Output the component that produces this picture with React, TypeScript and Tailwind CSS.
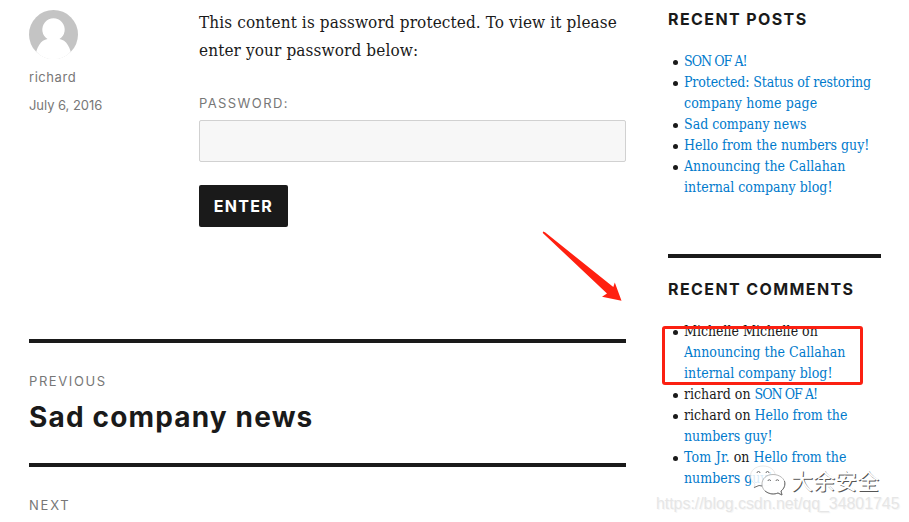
import type { ReactNode } from 'react';

const meta = "font-['Inter',sans-serif] text-[13px] text-[#777777]";
const link = 'text-[#007acc]';

function Avatar() {
  return (
    <svg className="block h-[49px] w-[49px]" viewBox="0 0 49 49">
      <defs>
        <clipPath id="round">
          <circle cx="24.5" cy="24.5" r="24.5" />
        </clipPath>
      </defs>
      <g clipPath="url(#round)">
        <rect width="49" height="49" fill="#c4c4c4" />
        <path d="M6 49 C7 37 12 30 18.5 29 A11.2 11.2 0 1 1 30.5 29 C37 30 42 37 43 49 Z" fill="#fff" />
        <rect y="43.5" width="49" height="6" fill="#fff" />
      </g>
    </svg>
  );
}

function Item({ children }: { children: ReactNode }) {
  return (
    <li className="flex">
      <span className="ml-[4.5px] mr-[6.5px] mt-[9px] h-[5px] w-[5px] shrink-0 rounded-full bg-[#1a1a1a]" />
      <div className="whitespace-nowrap">{children}</div>
    </li>
  );
}

function WidgetTitle({ children }: { children: ReactNode }) {
  return (
    <h2 className="font-['Inter',sans-serif] text-base font-bold leading-[21px] tracking-[1.4px]">
      {children}
    </h2>
  );
}

function SonOfA() {
  return <a className="tracking-[-0.95px] text-[#007acc]">SON OF A!</a>;
}

function WeChat() {
  return (
    <svg className="h-[34px] w-[38px]" viewBox="0 0 38 34">
      <path
        d="M14 2 C6 2 1.5 7 1.5 12 C1.5 16 4 18.5 6 20 L5 24 L10 21.5 C20 24 26.5 18 26.5 12 C26 6 21 2 14 2Z"
        stroke="#dedede"
        strokeWidth="0.7"
        fill="#fff"
        fillOpacity="0.85"
      />
      <path
        d="M24 10.5 C17 10.5 13 15 13 20 C13 26 18 30 24 30 C26 30 27.5 29.6 29 29 L33 31 L32 27 C34.5 25 36 23 36 20 C36 15 31 10.5 24 10.5Z"
        stroke="#9b9b9b"
        strokeWidth="0.7"
        fill="#fff"
        fillOpacity="0.85"
      />
      <g fill="none" stroke="#666" strokeWidth="0.9">
        <path d="M8 9 a1.5 1.5 0 0 1 3 0 M17 9 a1.5 1.5 0 0 1 3 0 M19 17 a1.3 1.3 0 0 1 2.6 0 M27 17 a1.3 1.3 0 0 1 2.6 0" />
        <path d="M5 23.5 L10 21.5 L13 22 M16 27 C21 30.5 25 30.5 29 29 L33 31 L32 27 C35 25 36.5 21 35.5 17" />
      </g>
    </svg>
  );
}

export default function App() {
  return (
    <div className="relative flex h-[522px] w-[909px] overflow-hidden bg-white pl-[29px] text-[#1a1a1a]">
      <main className="w-[597px] shrink-0">
        <article className="flex h-[339px]">
          <div className={`w-[170px] shrink-0 pt-[10px] ${meta}`}>
            <Avatar />
            <div className="mt-[4px] leading-7 tracking-[0.55px]">richard</div>
            <div className="leading-7 tracking-[-0.05px]">July 6, 2016</div>
          </div>
          <div className="grow pt-2">
            <p className="whitespace-nowrap font-['DejaVu_Serif_Condensed','DejaVu_Serif',serif] text-[17px] leading-7 tracking-[0.12px]">
              This content is password protected. To view it please
              <br />
              enter your password below:
            </p>
            <div className={`mt-[29px] leading-[21px] tracking-[1.4px] ${meta}`}>PASSWORD:</div>
            <input
              type="password"
              className="mt-[6px] block h-[42px] w-full rounded-[2px] border border-[#d1d1d1] bg-[#f7f7f7]"
            />
            <button className="mt-[23px] block h-[42px] w-[89px] rounded-[2px] bg-[#1a1a1a] font-['Inter',sans-serif] text-base font-bold tracking-[1.3px] text-white">
              ENTER
            </button>
          </div>
        </article>
        <nav>
          <div className="h-[124px] border-t-4 border-[#1a1a1a] pt-[28px]">
            <div className={`leading-[21px] tracking-[1.6px] ${meta}`}>PREVIOUS</div>
            <div className="mt-[7px] font-['Inter',sans-serif] text-[28px] font-bold leading-[36px] tracking-[1.16px]">
              Sad company news
            </div>
          </div>
          <div className="border-t-4 border-[#1a1a1a] pt-[28px]">
            <div className={`leading-[21px] tracking-[1.8px] ${meta}`}>NEXT</div>
          </div>
        </nav>
      </main>

      <aside className="ml-[42px] w-[213px] shrink-0 font-['DejaVu_Serif_Condensed','DejaVu_Serif',serif] text-sm leading-[21px]">
        <section className="h-[254px] pt-[9px]">
          <WidgetTitle>RECENT POSTS</WidgetTitle>
          <ul className="mt-[21px]">
            <Item><SonOfA /></Item>
            <Item>
              <a className={link}>
                <span className="tracking-[-0.11px]">Protected: Status of restoring</span>
                <br />
                <span className="tracking-[0.1px]">company home page</span>
              </a>
            </Item>
            <Item><a className={link}>Sad company news</a></Item>
            <Item><a className={link}>Hello from the numbers guy!</a></Item>
            <Item><a className={link}>Announcing the Callahan<br />internal company blog!</a></Item>
          </ul>
        </section>
        <section className="border-t-4 border-[#1a1a1a] pt-[21px]">
          <WidgetTitle>RECENT COMMENTS</WidgetTitle>
          <ul className="mt-[21px]">
            <Item>Michelle Michelle on<br /><a className={link}>Announcing the Callahan<br />internal company blog!</a></Item>
            <Item>richard on <SonOfA /></Item>
            <Item>richard on <a className={link}>Hello from the<br />numbers guy!</a></Item>
            <Item>
              <a className="tracking-[0.2px] text-[#007acc]">Tom Jr.</a> on <a className={link}>Hello from the<br />numbers guy!</a>
            </Item>
          </ul>
        </section>
      </aside>

      <div className="absolute left-[662px] top-[326px] h-[59px] w-[201px] rounded-[3px] border-3 border-[#fb2012]" />
      <svg className="absolute left-[540px] top-[228px] h-[76px] w-[86px]" viewBox="540 228 86 76">
        <path d="M543 231.5 L545 232.3 L613.3 287 L614.8 282.5 L621.5 300.8 L602 296.8 L607 293.5 L542.8 233Z" fill="#ff2010" />
      </svg>
      <div className="absolute left-[749px] top-[464px]">
        <WeChat />
      </div>
      <div className="absolute left-[791px] top-[463px] whitespace-nowrap font-['Noto_Sans_CJK_SC',sans-serif] text-[22px] leading-[32px] text-white [text-shadow:1px_1px_0_#555]">
        大余安全
      </div>
      <div className="absolute left-[656px] top-[494px] whitespace-nowrap font-['Liberation_Sans',Arial,sans-serif] text-[16px] leading-5 tracking-[-0.06px] text-[#e6e6e6] [text-shadow:1px_1px_0_#f6f6f6]">
        https://blog.csdn.net/qq_34801745
      </div>
    </div>
  );
}
